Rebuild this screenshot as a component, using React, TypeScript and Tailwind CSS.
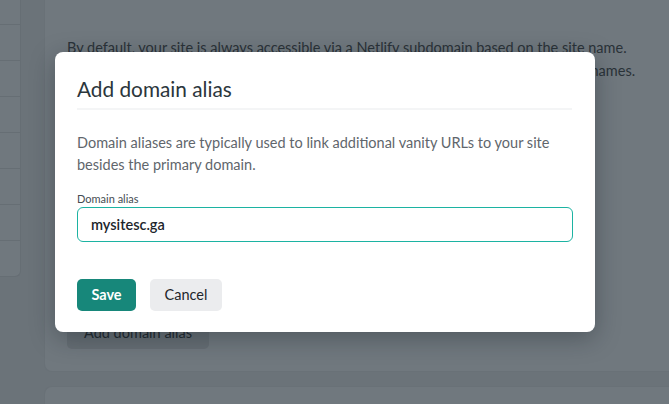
import React from "react";

export default function App() {
  const rows = [0, 1, 2, 3, 4, 5];
  return (
    <div
      className="relative w-[669px] h-[404px] overflow-hidden bg-[#6b7379]"
      style={{ fontFamily: "Lato, 'Liberation Sans', sans-serif" }}
    >
      {/* background page */}
      <div className="flex items-start gap-[23px]">
        <div className="w-[21px] h-[277px] shrink-0 rounded-br-[6px] border-r border-b border-[#666e74] bg-[#70787e] flex flex-col">
          <div className="h-[25px] border-b border-[#666e74]" />
          {rows.map((r) => (
            <div key={r} className="h-[36px] border-b border-[#666e74]" />
          ))}
        </div>
        <div className="flex-1 flex flex-col gap-[14px]">
          <div className="h-[372px] rounded-bl-[8px] bg-[#70787e] border-l border-b border-[#697177] pl-[22px] pt-[36px]">
            <p className="text-[14.5px] leading-[23px] text-[#2a3238] whitespace-nowrap">
              By default, your site is always accessible via a Netlify subdomain based on the site name.
            </p>
            <p className="text-[14.5px] leading-[23px] text-[#2a3238] whitespace-nowrap">
              Custom domains allow you to access your site via one or more non-Netlify domain names.
            </p>
            <div className="mt-[235px] w-[142px] h-[32px] rounded-[5px] bg-[#666e74] flex items-center justify-center text-[14.5px] text-[#20282e]">
              Add domain alias
            </div>
          </div>
          <div className="h-[40px] rounded-tl-[8px] bg-[#70787e] border-l border-t border-[#697177]" />
        </div>
      </div>

      {/* modal */}
      <div className="absolute left-[55px] top-[52px] w-[540px] h-[280px] rounded-[8px] bg-white shadow-[0_6px_24px_rgba(20,30,36,0.35)] px-[22px] pt-[22px] flex flex-col">
        <h2 className="text-[20.8px] leading-[30px] text-[#2b363c] font-normal">Add domain alias</h2>
        <div className="mt-[4px] w-[495px] h-[2px] bg-[#f4f5f6]" />
        <p className="mt-[22px] text-[14.5px] leading-[22px] text-[#5f666c]">
          Domain aliases are typically used to link additional vanity URLs to your site
          <br />
          besides the primary domain.
        </p>
        <label className="mt-[16px] text-[11px] leading-[14px] text-[#454c52]">Domain alias</label>
        <div className="mt-[1px] w-[496px] h-[35px] rounded-[6px] border-[1.5px] border-[#1cb3a2] flex items-center pl-[13px] text-[14.5px] font-semibold text-[#1c252b]">
          mysitesc.ga
        </div>
        <div className="mt-[37px] flex gap-[14px]">
          <button className="h-[32px] w-[59px] rounded-[5px] bg-[#17877a] text-white text-[14.5px] font-bold flex items-center justify-center">
            Save
          </button>
          <button className="h-[32px] w-[72px] rounded-[5px] bg-[#ebecee] text-[#1e262b] text-[14.5px] flex items-center justify-center">
            Cancel
          </button>
        </div>
      </div>
    </div>
  );
}
